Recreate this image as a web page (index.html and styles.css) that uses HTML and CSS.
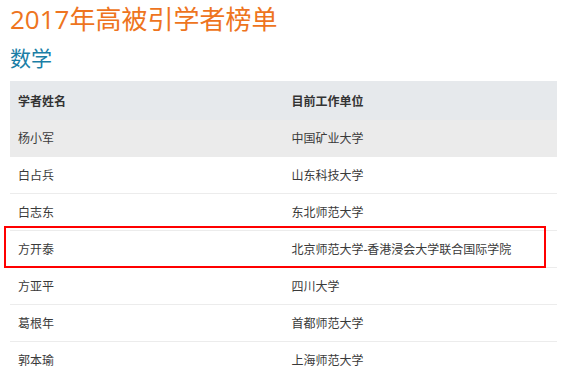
FILE: index.html
```html
<!DOCTYPE html>
<html lang="zh">
<head>
<meta charset="utf-8">
<link rel="stylesheet" href="styles.css">
</head>
<body>
<div class="page">
  <h1 class="title">2017年高被引学者榜单</h1>
  <h2 class="subject">数学</h2>
  <table class="list">
    <thead>
      <tr><th>学者姓名</th><th>目前工作单位</th></tr>
    </thead>
    <tbody>
      <tr class="shaded"><td>杨小军</td><td>中国矿业大学</td></tr>
      <tr><td>白占兵</td><td>山东科技大学</td></tr>
      <tr><td>白志东</td><td>东北师范大学</td></tr>
      <tr><td>方开泰</td><td>北京师范大学-香港浸会大学联合国际学院</td></tr>
      <tr><td>方亚平</td><td>四川大学</td></tr>
      <tr><td>葛根年</td><td>首都师范大学</td></tr>
      <tr><td>郭本瑜</td><td>上海师范大学</td></tr>
    </tbody>
  </table>
  <div class="highlight"></div>
</div>
</body>
</html>
```
FILE: styles.css
```css
html, body {
  margin: 0;
  padding: 0;
  background: #fff;
}
.page {
  position: relative;
  padding: 0 9px 0 10px;
  font-family: "Open Sans", "Noto Sans CJK SC", sans-serif;
}
.title {
  margin: 2px 0 0;
  font-size: 26px;
  line-height: 34px;
  font-weight: 400;
  color: #ee7420;
}
.subject {
  margin: 7px 0 0;
  font-size: 21px;
  line-height: 30px;
  font-weight: 400;
  color: #1a7ea6;
}
.list {
  margin-top: 8px;
  width: 547px;
  border-collapse: collapse;
  table-layout: fixed;
  font-size: 12px;
  color: #3a3a3a;
}
.list th, .list td {
  width: 50%;
  text-align: left;
  padding: 0 8px;
}
.list th {
  height: 39px;
  background: #e6e9ec;
  font-weight: 700;
  color: #333;
}
.list td {
  height: 36px;
  border-bottom: 1px solid #ececec;
}
.list .shaded td {
  background: #ebebeb;
  border-bottom-color: #ebebeb;
}
.highlight {
  position: absolute;
  left: 4px;
  top: 224px;
  width: 538px;
  height: 38px;
  border: 2px solid #f00;
}
```
